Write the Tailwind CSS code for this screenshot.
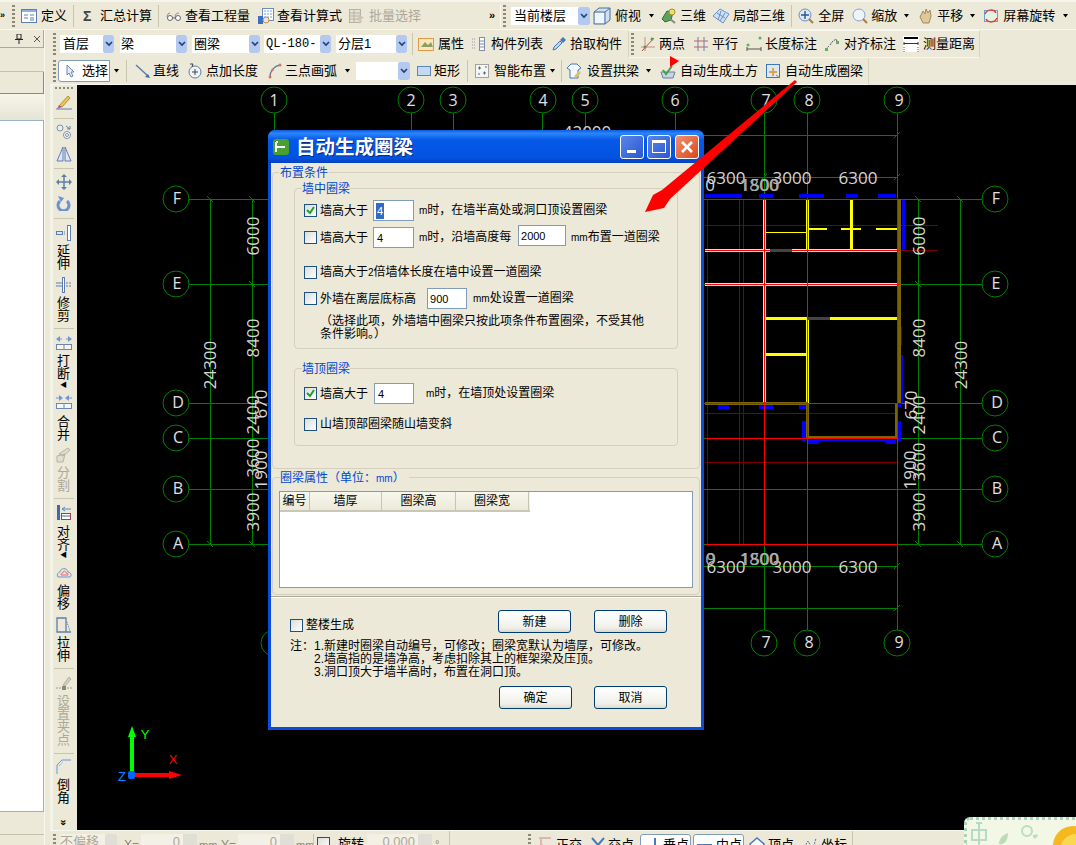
<!DOCTYPE html>
<html>
  <head>
    <meta charset="UTF-8" />
    <title>自动生成圈梁</title>
    <script src="https://cdn.jsdelivr.net/npm/@tailwindcss/browser@4"></script>
  </head>
  <body class="relative w-[1076px] h-[845px] overflow-hidden bg-[#ece9d8] text-[13px] leading-[16px] text-black font-['Liberation_Sans','Noto_Sans_CJK_SC',sans-serif]">
    <!-- top toolbar -->
    <div class="flex items-center h-[30px] border-t-2 border-t-[#f6f5ec] border-b border-b-[#f8f7f0] whitespace-nowrap">
      <span class="w-[5px] text-[9px] font-bold leading-none">»</span>
      <span class="ml-[7px] w-[3px] h-[22px] bg-[repeating-linear-gradient(180deg,#8a8878_0_2px,transparent_2px_4px)]"></span>
      <svg class="ml-[6px] w-4 h-4" viewBox="0 0 16 16"><rect x=".5" y="1.5" width="15" height="13" fill="#fff" stroke="#5b7fb5"/><rect x="1" y="2" width="14" height="2" fill="#8fb0e0"/><path d="M3 7h4M3 10h4M9 7h4M9 10h4M9 12h4" stroke="#5b7fb5"/></svg>
      <span class="ml-[4px]">定义</span>
      <span class="ml-[6px] w-px h-[22px] bg-[#c9c6b0]"></span>
      <span class="ml-[9px] w-[9px] text-[14px] font-bold text-[#444]">Σ</span>
      <span class="ml-[8px]">汇总计算</span>
      <span class="ml-[6px] w-px h-[22px] bg-[#c9c6b0]"></span>
      <svg class="ml-[7px] w-4 h-4" viewBox="0 0 16 16"><path d="M1 9c0-3 2-4 3-4M9 9c0-3 2-4 4-4" fill="none" stroke="#888"/><circle cx="4" cy="10" r="2.5" fill="#fff" stroke="#666"/><circle cx="12" cy="10" r="2.5" fill="#fff" stroke="#666"/><path d="M6 10h4" stroke="#666"/></svg>
      <span class="ml-[3px]">查看工程量</span>
      <svg class="ml-[8px] w-4 h-4" viewBox="0 0 16 16"><rect x="4.5" y=".5" width="11" height="12" fill="#fff" stroke="#6a8cc0"/><path d="M6 3h8M6 6h8M6 9h8" stroke="#7d9bd0" stroke-dasharray="2 1"/><rect x="0" y="8" width="5" height="8" fill="#3a6fc4"/><circle cx="8" cy="12" r="3" fill="#d8e8f8" stroke="#c89030"/></svg>
      <span class="ml-[3px]">查看计算式</span>
      <svg class="ml-[7px] w-4 h-4" viewBox="0 0 16 16"><rect x=".5" y="1.5" width="11" height="13" fill="#e4e2d4" stroke="#b5b3a3"/><path d="M1 5h10M1 8h10M1 11h10M5 2v12" stroke="#b5b3a3"/><path d="M10 6l5 4-3 1 1 3-2 1-1-3-2 1z" fill="#c9c7b8"/></svg>
      <span class="ml-[4px] text-[#aca899]">批量选择</span>
      <span class="ml-[68px] w-[9px] text-[11px] font-bold leading-none">»</span>
      <span class="ml-[2px] w-px h-[24px] bg-[#f8f7f0]"></span>
      <span class="ml-[2px] w-[3px] h-[22px] bg-[repeating-linear-gradient(180deg,#8a8878_0_2px,transparent_2px_4px)]"></span>
      <div class="ml-[5px] w-[79px] h-[18px] bg-white flex items-center justify-between pl-[3px]">
        <span>当前楼层</span>
        <span class="w-[12px] h-[18px] bg-[#b4c9ef] rounded-[2px] flex items-center justify-center"><svg class="w-2 h-[6px]" viewBox="0 0 8 6"><path d="M1 1l3 3 3-3" fill="none" stroke="#1f3f7a" stroke-width="1.6"/></svg></span>
      </div>
      <svg class="ml-[3px] w-[18px] h-[18px]" viewBox="0 0 18 18"><path d="M1 5l5-4h11v12l-5 4H1z" fill="#cfe0ee" stroke="#48709a"/><path d="M1 5h11v12M12 5l5-4" fill="none" stroke="#48709a"/><rect x="2" y="6" width="9" height="10" fill="#eef5fb"/></svg>
      <span class="ml-[4px]">俯视</span>
      <svg class="ml-[7px] w-[7px] h-1" viewBox="0 0 7 4"><path d="M1 0h5L3.500 3.500z" fill="#000"/></svg>
      <svg class="ml-[6px] w-4 h-4" viewBox="0 0 16 16"><path d="M1 11l5-8 6 1-2 8-6 2z" fill="#5aa35a" stroke="#2f6f3a"/><circle cx="11" cy="4" r="3" fill="#f0e060" stroke="#a09030"/><path d="M9 11l5 4" stroke="#888" stroke-width="2"/></svg>
      <span class="ml-[3px]">三维</span>
      <svg class="ml-[6px] w-[18px] h-4" viewBox="0 0 18 16"><path d="M1 8l7-7 9 5-6 9z" fill="#cfe0f4" stroke="#6a8fc0"/><path d="M5 5l8 5M9 3l-3 9M13 5l-5 8" stroke="#6a8fc0"/></svg>
      <span class="ml-[3px]">局部三维</span>
      <span class="ml-[6px] w-px h-[22px] bg-[#c9c6b0]"></span>
      <svg class="ml-[6px] w-4 h-4" viewBox="0 0 16 16"><circle cx="7" cy="7" r="6" fill="#dce8f6" stroke="#6f8fbb"/><path d="M7 3v8M3 7h8" stroke="#30558f" stroke-width="1.4"/><path d="M11 11l4 4" stroke="#b07a3a" stroke-width="2"/></svg>
      <span class="ml-[4px]">全屏</span>
      <svg class="ml-[8px] w-4 h-4" viewBox="0 0 16 16"><circle cx="7" cy="7" r="6" fill="#eef3fa" stroke="#8ba4c6"/><path d="M11 11l4 4" stroke="#b07a3a" stroke-width="2"/></svg>
      <span class="ml-[3px]">缩放</span>
      <svg class="ml-[6px] w-[7px] h-1" viewBox="0 0 7 4"><path d="M1 0h5L3.500 3.500z" fill="#000"/></svg>
      <svg class="ml-[8px] w-4 h-4" viewBox="0 0 16 16"><path d="M2 9l3-6 2 3 1-5 2 4 2-3 1 6-2 7H5z" fill="#e0c89a" stroke="#a08a60"/></svg>
      <span class="ml-[3px]">平移</span>
      <svg class="ml-[6px] w-[7px] h-1" viewBox="0 0 7 4"><path d="M1 0h5L3.500 3.500z" fill="#000"/></svg>
      <svg class="ml-[7px] w-4 h-4" viewBox="0 0 16 16"><rect x="1.500" y="2.500" width="13" height="11" fill="#e4f2e0" stroke="#6d9fd0"/><path d="M2 6c2-5 9-5 11-1M14 10c-2 5-9 5-11 1" fill="none" stroke="#e04040" stroke-width="1.500"/></svg>
      <span class="ml-[4px]">屏幕旋转</span>
      <svg class="ml-[7px] w-[7px] h-1" viewBox="0 0 7 4"><path d="M1 0h5L3.500 3.500z" fill="#000"/></svg>
    </div>

    <div class="flex h-[815px]">
      <!-- left pane -->
      <div class="w-[50px] shrink-0 flex">
        <div class="w-[45px] flex flex-col border-r border-r-[#f8f7f0]">
          <div class="h-[18px] flex items-center border-b border-b-[#aca899] border-r border-r-[#aca899]">
            <svg class="ml-[15px] w-2 h-[10px]" viewBox="0 0 8 10"><path d="M2 0h4v5H2zM0 5.500h8M4 6v4" fill="none" stroke="#222"/></svg>
            <svg class="ml-[10px] w-2 h-2" viewBox="0 0 8 8"><path d="M1 1l6 6M7 1L1 7" stroke="#555"/></svg>
          </div>
          <div class="h-[24px] border-b border-b-[#c5c2ae]"></div>
          <div class="h-[22px] border-b border-b-[#8c8a7a] border-r border-r-[#8c8a7a] bg-[#ece9d8]"></div>
          <div class="h-[26px] bg-[linear-gradient(180deg,#f6f5ea,#e6e4d4)]"></div>
          <div class="h-[692px] bg-white border-y border-y-[#9cb0c8] border-r border-r-[#9cb0c8]"></div>
          <div class="h-[23px] border-b border-b-[#c5c2ae]"></div>
        </div>
      </div>

      <div class="w-[1026px]">
        <!-- row 2 -->
        <div class="flex items-center h-[28px] whitespace-nowrap">
          <span class="ml-[3px] w-[3px] h-[22px] bg-[repeating-linear-gradient(180deg,#8a8878_0_2px,transparent_2px_4px)]"></span>
          <div class="ml-[4px] w-[54px] h-[18px] bg-white flex items-center justify-between pl-[3px]">
            <span>首层</span>
            <span class="w-[11px] h-[18px] bg-[#b4c9ef] rounded-[2px] flex items-center justify-center"><svg class="w-2 h-[6px]" viewBox="0 0 8 6"><path d="M1 1l3 3 3-3" fill="none" stroke="#1f3f7a" stroke-width="1.6"/></svg></span>
          </div>
          <div class="ml-[6px] w-[67px] h-[18px] bg-white flex items-center justify-between pl-[1px]">
            <span>梁</span>
            <span class="w-[11px] h-[18px] bg-[#b4c9ef] rounded-[2px] flex items-center justify-center"><svg class="w-2 h-[6px]" viewBox="0 0 8 6"><path d="M1 1l3 3 3-3" fill="none" stroke="#1f3f7a" stroke-width="1.6"/></svg></span>
          </div>
          <div class="ml-[5px] w-[68px] h-[18px] bg-white flex items-center justify-between pl-[2px]">
            <span>圈梁</span>
            <span class="w-[11px] h-[18px] bg-[#b4c9ef] rounded-[2px] flex items-center justify-center"><svg class="w-2 h-[6px]" viewBox="0 0 8 6"><path d="M1 1l3 3 3-3" fill="none" stroke="#1f3f7a" stroke-width="1.6"/></svg></span>
          </div>
          <div class="ml-[4px] w-[67px] h-[18px] bg-white flex items-center justify-between pl-[2px] text-[12px] font-['Liberation_Mono','Noto_Sans_CJK_SC',monospace]">
            <span>QL-180-</span>
            <span class="w-[11px] h-[18px] bg-[#b4c9ef] rounded-[2px] flex items-center justify-center"><svg class="w-2 h-[6px]" viewBox="0 0 8 6"><path d="M1 1l3 3 3-3" fill="none" stroke="#1f3f7a" stroke-width="1.6"/></svg></span>
          </div>
          <div class="ml-[5px] w-[71px] h-[18px] bg-white flex items-center justify-between pl-[2px]">
            <span>分层1</span>
            <span class="w-[11px] h-[18px] bg-[#b4c9ef] rounded-[2px] flex items-center justify-center"><svg class="w-2 h-[6px]" viewBox="0 0 8 6"><path d="M1 1l3 3 3-3" fill="none" stroke="#1f3f7a" stroke-width="1.6"/></svg></span>
          </div>
          <span class="ml-[5px] w-px h-[22px] bg-[#c9c6b0]"></span>
          <svg class="ml-[5px] w-4 h-4" viewBox="0 0 16 16"><rect x=".5" y="2.500" width="15" height="12" fill="#fbe6c0" stroke="#e09a40"/><path d="M3 11l4-5 3 3 3-3 2 5z" fill="#8a9f60"/></svg>
          <span class="ml-[4px]">属性</span>
          <svg class="ml-[6px] w-4 h-4" viewBox="0 0 16 16"><rect x="9.500" y="1.500" width="5" height="13" fill="#fff" stroke="#7d90a8"/><path d="M10 5h4M10 8h4M10 11h4" stroke="#7d90a8"/><path d="M2 3h4M2 6h4M2 9h4M2 12h4" stroke="#8a9ab0" stroke-dasharray="1 1"/></svg>
          <span class="ml-[5px]">构件列表</span>
          <svg class="ml-[8px] w-4 h-4" viewBox="0 0 16 16"><path d="M2 14l1-3 6-6 2 2-6 6z" fill="#bcd4f0" stroke="#4a78b8"/><path d="M9 4l3-3 3 3-3 3z" fill="#4a78b8"/></svg>
          <span class="ml-[3px]">拾取构件</span>
          <div class="ml-[6px] w-[352px] h-[28px] flex items-center border-x border-x-[#d6d3be] border-y border-y-[#f8f7f0]">
            <span class="ml-[2px] w-[3px] h-[22px] bg-[repeating-linear-gradient(180deg,#8a8878_0_2px,transparent_2px_4px)]"></span>
            <svg class="ml-[6px] w-4 h-4" viewBox="0 0 16 16"><path d="M1 11h14M5 1v14" stroke="#c09080"/><path d="M2 15L14 2" stroke="#c04848"/><circle cx="5" cy="11" r="1.500" fill="#5a9a50"/><circle cx="12" cy="3" r="1.500" fill="#5a9a50"/></svg>
            <span class="ml-[3px]">两点</span>
            <svg class="ml-[8px] w-4 h-4" viewBox="0 0 16 16"><path d="M1 5h14M1 11h14" stroke="#c06060"/><path d="M5 1v14M11 1v14" stroke="#7080b0"/></svg>
            <span class="ml-[3px]">平行</span>
            <svg class="ml-[8px] w-4 h-4" viewBox="0 0 16 16"><circle cx="14" cy="2" r="1.500" fill="#60b060"/><circle cx="2" cy="9" r="1.500" fill="#60b060"/><path d="M1 11v4M15 11v4M1 13h14" stroke="#555"/></svg>
            <span class="ml-[3px]">长度标注</span>
            <svg class="ml-[7px] w-4 h-4" viewBox="0 0 16 16"><path d="M2 13l3-3M6 9l2-3 4-3 2 4" fill="none" stroke="#555" stroke-dasharray="2 1"/><rect x="1" y="12" width="3" height="3" fill="#60b060"/><rect x="12" y="5" width="3" height="3" fill="#60b060"/></svg>
            <span class="ml-[4px]">对齐标注</span>
            <svg class="ml-[7px] w-4 h-4" viewBox="0 0 16 16"><rect width="16" height="16" fill="#fff"/><path d="M1 2h14" stroke="#000" stroke-width="2"/><path d="M1 6v3M15 6v3M1 7.500h14" stroke="#333"/><path d="M1 11v5M15 11v5" stroke="#555" stroke-dasharray="1 1"/></svg>
            <span class="ml-[4px]">测量距离</span>
          </div>
        </div>

        <!-- row 3 -->
        <div class="flex items-center w-[819px] h-[27px] whitespace-nowrap border-r border-r-[#d6d3be] border-b border-b-[#f8f7f0]">
          <span class="ml-[3px] w-[3px] h-[22px] bg-[repeating-linear-gradient(180deg,#8a8878_0_2px,transparent_2px_4px)]"></span>
          <div class="ml-[2px] w-[52px] h-[22px] bg-white border border-[#7f9db9] rounded-l-[3px] flex items-center">
            <svg class="ml-[6px] w-[10px] h-[14px]" viewBox="0 0 10 14"><path d="M2 1v10l2-2 2 4 2-1-2-4h3z" fill="#e4ecf8" stroke="#6d88ac"/></svg>
            <span class="ml-[7px]">选择</span>
          </div>
          <svg class="ml-[3px] w-[7px] h-1" viewBox="0 0 7 4"><path d="M1 0h5L3.500 3.500z" fill="#000"/></svg>
          <span class="ml-[6px] w-px h-[22px] bg-[#c9c6b0]"></span>
          <svg class="ml-[8px] w-4 h-4" viewBox="0 0 16 16"><path d="M1 2l12 11" stroke="#5d7fa8" stroke-width="1.500"/><path d="M15 15l-5-1 3-3z" fill="#3b6ea8"/></svg>
          <span class="ml-[2px]">直线</span>
          <svg class="ml-[8px] w-4 h-4" viewBox="0 0 16 16"><circle cx="8" cy="9" r="6" fill="#eef3fa" stroke="#5d7fb0"/><path d="M8 6v6M5 9h6" stroke="#444"/><path d="M3 1h3l-1 3" fill="none" stroke="#444"/></svg>
          <span class="ml-[3px]">点加长度</span>
          <svg class="ml-[9px] w-4 h-4" viewBox="0 0 16 16"><path d="M3 14C3 8 7 3 13 2" fill="none" stroke="#5a7fa8" stroke-width="1.300"/><circle cx="3" cy="14" r="1.500" fill="#e07060"/><circle cx="5.500" cy="7" r="1.300" fill="#e07060"/><circle cx="13" cy="2" r="1.500" fill="#e07060"/></svg>
          <span class="ml-[2px]">三点画弧</span>
          <svg class="ml-[7px] w-[7px] h-1" viewBox="0 0 7 4"><path d="M1 0h5L3.500 3.500z" fill="#000"/></svg>
          <div class="ml-[5px] w-[54px] h-[18px] bg-white flex items-center justify-end">
            <span class="w-[12px] h-[18px] bg-[#b4c9ef] rounded-[2px] flex items-center justify-center"><svg class="w-2 h-[6px]" viewBox="0 0 8 6"><path d="M1 1l3 3 3-3" fill="none" stroke="#1f3f7a" stroke-width="1.6"/></svg></span>
          </div>
          <svg class="ml-[6px] w-4 h-4" viewBox="0 0 16 16"><rect x="1.500" y="3.500" width="13" height="9" fill="#c5d9f2" stroke="#5d86bb"/></svg>
          <span class="ml-[2px]">矩形</span>
          <span class="ml-[7px] w-px h-[22px] bg-[#c9c6b0]"></span>
          <svg class="ml-[6px] w-4 h-4" viewBox="0 0 16 16"><rect x="1.500" y="1.500" width="13" height="13" fill="#f6f6ee" stroke="#555" stroke-dasharray="1 1"/><path d="M4 5h3M5.500 3.500v3M9 10h3M10.500 8.500v3M4 11h2M11 4h2" stroke="#3d6aa8"/></svg>
          <span class="ml-[4px]">智能布置</span>
          <svg class="ml-[3px] w-[7px] h-1" viewBox="0 0 7 4"><path d="M1 0h5L3.500 3.500z" fill="#000"/></svg>
          <span class="ml-[5px] w-px h-[22px] bg-[#c9c6b0]"></span>
          <svg class="ml-[4px] w-4 h-4" viewBox="0 0 16 16"><path d="M1 5l4-4h6l4 4-3 2v8H4V7z" fill="#f4f8fc" stroke="#3f78b8"/><path d="M8 13l5-5 2 2-5 5z" fill="#e0c070"/></svg>
          <span class="ml-[5px]">设置拱梁</span>
          <svg class="ml-[6px] w-[7px] h-1" viewBox="0 0 7 4"><path d="M1 0h5L3.500 3.500z" fill="#000"/></svg>
          <span class="relative ml-[8px] w-4 h-4">
            <svg class="w-4 h-4" viewBox="0 0 16 16"><path d="M1 9h14l-2 6H3z" fill="#c8d4e4" stroke="#6880a0"/><path d="M3 7l3 4 6-8" fill="none" stroke="#40a050" stroke-width="2"/></svg>
            <svg class="absolute left-[10px] -top-[7px] w-[9px] h-[11px]" viewBox="0 0 9 11"><path d="M0 0l9 5-9 6z" fill="#f00"/></svg>
          </span>
          <span class="ml-[4px]">自动生成土方</span>
          <svg class="ml-[7px] w-4 h-4" viewBox="0 0 16 16"><rect x="1.500" y="1.500" width="13" height="13" fill="#dce8f6" stroke="#3f78b8"/><path d="M4 9h8M8 5v8" stroke="#e0a050" stroke-width="2"/><path d="M11 12l4 3" stroke="#b07a3a"/></svg>
          <span class="ml-[4px]">自动生成圈梁</span>
        </div>

        <!-- vertical toolbar + drawing -->
        <div class="flex h-[745px]">
          <div class="w-[27px] shrink-0 flex flex-col items-center text-center whitespace-nowrap leading-[13px] bg-[linear-gradient(90deg,#f4f3e8_0,#f4f3e8_3px,#ece9d8_3px)]">
            <span class="mt-[2px] w-[18px] h-[2px] bg-[repeating-linear-gradient(90deg,#8a8878_0_2px,transparent_2px_4px)]"></span>
            <svg class="mt-[5px] w-4 h-4 shrink-0" viewBox="0 0 16 16"><path d="M3 12l9-10 2 2-8 9z" fill="#eac95a" stroke="#b09030"/><path d="M1 15l2-4 3 2z" fill="#c0508a"/><path d="M0 15h16" stroke="#5d7fb5"/></svg>
            <span class="mt-[8px] w-5 h-px bg-[#c9c6b0]"></span>
            <svg class="mt-[5px] w-4 h-4 shrink-0" viewBox="0 0 16 16"><circle cx="4" cy="4" r="3" fill="#e8eef6" stroke="#7f8fa5"/><circle cx="11" cy="11" r="3.500" fill="#fff" stroke="#7f8fa5"/><circle cx="11" cy="11" r="1.500" fill="none" stroke="#7f8fa5"/><path d="M10 2l4 3M14 2v3h-3" fill="none" stroke="#5d7fb5"/></svg>
            <svg class="mt-[6px] w-4 h-4 shrink-0" viewBox="0 0 16 16"><path d="M7 1L1 15h6zM9 1l6 14H9z" fill="#dde6f4" stroke="#5d7fb5"/></svg>
            <span class="mt-[6px] w-5 h-px bg-[#c9c6b0]"></span>
            <svg class="mt-[5px] w-4 h-4 shrink-0" viewBox="0 0 16 16"><path d="M8 1v14M1 8h14" stroke="#5d7fa8" stroke-width="1.500"/><path d="M8 0l3 3H5zM8 16l-3-3h6zM0 8l3-3v6zM16 8l-3 3V5z" fill="#5d7fa8"/></svg>
            <svg class="mt-[5px] w-4 h-4 shrink-0" viewBox="0 0 16 16"><path d="M4 6a5.500 5.500 0 1 0 7 0" fill="none" stroke="#6c92d4" stroke-width="3"/><path d="M2 1l6 2-3 4z" fill="#6c92d4"/></svg>
            <span class="mt-[7px] w-5 h-px bg-[#c9c6b0]"></span>
            <svg class="mt-[6px] w-4 h-4 shrink-0" viewBox="0 0 16 16"><rect x="11.500" y=".5" width="3" height="15" fill="#fff" stroke="#5d7fb5"/><rect x=".5" y="6.500" width="6" height="3" fill="#dde6f4" stroke="#5d7fb5"/><path d="M8 7h2M8 9h2" stroke="#5d7fb5" stroke-dasharray="1 1"/></svg>
            <span class="mt-[3px]">延<br />伸</span>
            <svg class="mt-[7px] w-4 h-4 shrink-0" viewBox="0 0 16 16"><rect x="6.500" y=".5" width="2" height="15" fill="#fff" stroke="#5d7fb5"/><path d="M0 6h6M0 9h6" stroke="#5d7fb5"/><path d="M10 6h5M10 9h5" stroke="#5d7fb5" stroke-dasharray="2 1"/></svg>
            <span class="mt-[3px]">修<br />剪</span>
            <span class="mt-[6px] w-5 h-px bg-[#c9c6b0]"></span>
            <svg class="mt-[6px] w-4 h-4 shrink-0" viewBox="0 0 16 16"><path d="M0 4l4-3v6zM16 4l-4-3v6z" fill="#6f96dd"/><path d="M4 4h2M10 4h2" stroke="#6f96dd"/><rect x=".5" y="9.500" width="15" height="5" fill="#f4f6fa" stroke="#6d88ac"/><path d="M8 9v6" stroke="#6d88ac"/></svg>
            <span class="mt-[3px]">打<br />断</span>
            <span class="text-[7px] leading-[9px]">◀</span>
            <svg class="mt-[5px] w-4 h-4 shrink-0" viewBox="0 0 16 16"><path d="M7 4L3 1v6zM9 4l4-3v6z" fill="#6f96dd"/><path d="M0 4h3M13 4h3" stroke="#6f96dd"/><rect x=".5" y="9.500" width="15" height="5" fill="#f4f6fa" stroke="#6d88ac"/><path d="M8 9v6" stroke="#6d88ac"/></svg>
            <span class="mt-[5px]">合<br />并</span>
            <svg class="mt-[6px] w-4 h-4 shrink-0" viewBox="0 0 16 16"><path d="M1 9l8-2-2 8H1zM3 7l9-6 2 2-7 6z" fill="#e0ded0" stroke="#b5b3a3"/></svg>
            <span class="mt-[3px] text-[#aca899]">分<br />割</span>
            <span class="mt-[6px] w-5 h-px bg-[#c9c6b0]"></span>
            <svg class="mt-[6px] w-4 h-4 shrink-0" viewBox="0 0 16 16"><rect x="1" y="0" width="3" height="15" fill="#3f6aa8"/><path d="M6 4h9M9 2L6 4l3 2" fill="none" stroke="#5d86c0"/><rect x="5.500" y="8.500" width="9" height="6" fill="#fff" stroke="#a04040"/><path d="M6 11h8" stroke="#3f6aa8"/></svg>
            <span class="mt-[4px]">对<br />齐</span>
            <span class="text-[7px] leading-[8px]">◀</span>
            <svg class="mt-[6px] w-4 h-4 shrink-0" viewBox="0 0 16 16"><path d="M2 12c-2-3 1-5 2-5 0-4 7-5 8 0 3 0 4 4 2 5z" fill="#dfe6f2" stroke="#7a93b8"/><path d="M5 10c0-2 1-2 2-2 0-3 3-2 3 0 2 0 2 1 2 2z" fill="#fbe0dc" stroke="#e07060"/></svg>
            <span class="mt-[3px]">偏<br />移</span>
            <svg class="mt-[7px] w-4 h-4 shrink-0" viewBox="0 0 16 16"><path d="M1 1h9v14H1zM10 15h5" fill="none" stroke="#5d7fa8" stroke-width="1.300"/><path d="M11 5l3 9" stroke="#5d7fa8" stroke-dasharray="1 1"/></svg>
            <span class="mt-[3px]">拉<br />伸</span>
            <span class="mt-[6px] w-5 h-px bg-[#c9c6b0]"></span>
            <svg class="mt-[7px] w-4 h-4 shrink-0" viewBox="0 0 16 16"><path d="M7 9l6-8 2 2-6 7z" fill="#d0cec0" stroke="#b5b3a3"/><path d="M0 12h5M11 12h5" stroke="#a09e8e" stroke-dasharray="2 1"/><rect x="6" y="10" width="4" height="4" fill="#8a8878"/></svg>
            <span class="mt-[2px] text-[#aca899]">设<br />置<br />夹<br />点</span>
            <span class="mt-[7px] w-5 h-px bg-[#c9c6b0]"></span>
            <svg class="mt-[5px] w-4 h-4 shrink-0" viewBox="0 0 16 16"><path d="M1 15V6l5-5h9" fill="none" stroke="#5a9ae0"/><path d="M3 7l4-4" stroke="#5a9ae0" stroke-dasharray="1 1"/></svg>
            <span class="mt-[3px]">倒<br />角</span>
            <span class="mt-[14px] text-[11px] font-bold leading-[9px] rotate-90">»</span>
          </div>

          <svg class="block w-[999px] h-[745px] bg-black" viewBox="77 85 999 745" font-family="'Open Sans',sans-serif">
            <g fill="none" stroke="#008000" shape-rendering="crispEdges">
              <path d="M274.500 113V630M411.500 113V630M453.500 113V630M542.500 113V630M585.500 113V630M675.500 113V630M764.500 113V630M807.500 113V630M897.500 113V630" />
              <path d="M189 199.500H982M189 284.500H982M189 403.500H982M189 438.500H982M189 489.500H982M189 544.500H982" />
              <path d="M210.500 199V544M252.500 199V544M918.500 199V544M960.500 199V544" />
              <path d="M274 135.500H897M274 177.500H897M274 566.500H897M274 608.500H897" />
            </g>
            <path d="M207 196l6 6M249 196l6 6M207 541l6 6M249 541l6 6M249 281l6 6M915 196l6 6M957 196l6 6M915 281l6 6M915 541l6 6M957 541l6 6M894 138l6-6M894 180l6-6M894 569l6-6M894 611l6-6M761 180l6-6M804 180l6-6" stroke="#008000" />
            <g fill="none" stroke="#008000">
              <circle cx="274" cy="100" r="13"/><circle cx="411" cy="100" r="13"/><circle cx="453" cy="100" r="13"/><circle cx="543" cy="100" r="13"/><circle cx="585" cy="100" r="13"/><circle cx="675" cy="100" r="13"/><circle cx="764" cy="100" r="13"/><circle cx="807" cy="100" r="13"/><circle cx="897" cy="100" r="13"/>
              <circle cx="274" cy="643" r="13"/><circle cx="764" cy="643" r="13"/><circle cx="807" cy="643" r="13"/><circle cx="897" cy="643" r="13"/>
              <circle cx="176" cy="199" r="13"/><circle cx="176" cy="284" r="13"/><circle cx="176" cy="403" r="13"/><circle cx="176" cy="438" r="13"/><circle cx="176" cy="489" r="13"/><circle cx="176" cy="544" r="13"/>
              <circle cx="995" cy="199" r="13"/><circle cx="995" cy="284" r="13"/><circle cx="995" cy="403" r="13"/><circle cx="995" cy="438" r="13"/><circle cx="995" cy="489" r="13"/><circle cx="995" cy="544" r="13"/>
            </g>

            <!-- walls and beams -->
            <g shape-rendering="crispEdges">
              <path d="M705 225.500H938M705 250.500H938M705 413.500H897M705 462.500H897M707.500 199V544M739.500 199V544M743.500 199V544" stroke="#800000" fill="none"/>
              <g fill="#ff0">
                <rect x="705" y="249" width="195" height="3"/><rect x="705" y="283" width="195" height="3"/>
                <rect x="763" y="199" width="3" height="204"/><rect x="806" y="199" width="3" height="52"/><rect x="806" y="318" width="3" height="85"/>
                <rect x="766" y="317" width="41" height="3"/><rect x="830" y="317" width="70" height="3"/><rect x="766" y="353" width="41" height="3"/>
                <rect x="850" y="200" width="3" height="49"/><rect x="809" y="228" width="18" height="2"/><rect x="841" y="228" width="20" height="2"/><rect x="876" y="228" width="24" height="2"/><rect x="766" y="232" width="41" height="1"/>
              </g>
              <g fill="#00f">
                <rect x="705" y="194" width="37" height="4"/><rect x="759" y="194" width="14" height="4"/><rect x="799" y="194" width="25" height="4"/><rect x="846" y="194" width="11" height="4"/><rect x="878" y="194" width="18" height="4"/>
                <rect x="902" y="200" width="3" height="50"/><rect x="901" y="327" width="1" height="18"/><rect x="898" y="355" width="5" height="48"/>
                <rect x="718" y="405" width="11" height="4"/><rect x="759" y="405" width="14" height="4"/><rect x="799" y="405" width="7" height="4"/>
                <rect x="802" y="421" width="4" height="20"/><rect x="897" y="421" width="4" height="20"/><rect x="807" y="440" width="89" height="1"/><rect x="807" y="441" width="12" height="3"/><rect x="886" y="441" width="10" height="3"/><rect x="897" y="403" width="4" height="4"/>
              </g>
              <g fill="#7a6500">
                <rect x="705" y="402" width="102" height="3"/><rect x="898" y="199" width="3" height="204"/><rect x="806" y="403" width="3" height="35"/><rect x="895" y="403" width="2" height="35"/><rect x="807" y="436" width="90" height="3"/>
              </g>
              <path d="M705 199.500H897M764.500 199V544M807.500 199V544M897.500 199V544M705 403.500H897M705 438.500H897M705 489.500H897M705 544.500H897M705 250.500H900M705 284.500H900" stroke="#f00" fill="none"/>
              <rect x="807" y="317" width="23" height="3" fill="#444"/><rect x="770" y="249" width="22" height="3" fill="#444"/>
            </g>

            <!-- dimension text -->
            <g fill="#d6d6d6" font-size="17" text-anchor="middle" dominant-baseline="central">
              <text x="587" y="131">42000</text>
              <text x="726" y="177">6300</text><text x="792" y="177">3000</text><text x="858" y="177">6300</text>
              <text x="759" y="184" fill="#b0b0b0">1800</text><text x="760" y="184" fill="#b0b0b0">1500</text><text x="710" y="184">0</text>
              <text x="726" y="566">6300</text><text x="792" y="566">3000</text><text x="858" y="566">6300</text>
              <text x="759" y="558" fill="#b0b0b0">1800</text><text x="760" y="558" fill="#b0b0b0">1500</text><text x="710" y="558" fill="#b0b0b0">0</text><text x="711" y="558" fill="#b0b0b0">9</text>
              <text transform="translate(209 365) rotate(-90)">24300</text>
              <text transform="translate(252 236) rotate(-90)">6000</text>
              <text transform="translate(252 338) rotate(-90)">8400</text>
              <text transform="translate(260 404) rotate(-90)">670</text>
              <text transform="translate(252 415) rotate(-90)">2400</text>
              <text transform="translate(252 458) rotate(-90)">3600</text>
              <text transform="translate(260 470) rotate(-90)">1900</text>
              <text transform="translate(252 512) rotate(-90)">3900</text>
              <text transform="translate(960 365) rotate(-90)">24300</text>
              <text transform="translate(918 236) rotate(-90)">6000</text>
              <text transform="translate(918 338) rotate(-90)">8400</text>
              <text transform="translate(910 405) rotate(-90)">670</text>
              <text transform="translate(918 415) rotate(-90)">2400</text>
              <text transform="translate(918 462) rotate(-90)">3600</text>
              <text transform="translate(909 470) rotate(-90)">1900</text>
              <text transform="translate(918 512) rotate(-90)">3900</text>
            </g>
            <g fill="#e0e0e0" font-size="16" text-anchor="middle" dominant-baseline="central">
              <text x="274" y="100">1</text><text x="411" y="100">2</text><text x="453" y="100">3</text><text x="543" y="100">4</text><text x="585" y="100">5</text><text x="675" y="100">6</text><text x="766" y="100">7</text><text x="809" y="100">8</text><text x="899" y="100">9</text>
              <text x="766" y="642">7</text><text x="809" y="642">8</text><text x="899" y="642">9</text>
              <text x="177" y="198">F</text><text x="177" y="283">E</text><text x="178" y="402">D</text><text x="178" y="437">C</text><text x="178" y="488">B</text><text x="178" y="543">A</text>
              <text x="996" y="198">F</text><text x="996" y="283">E</text><text x="997" y="402">D</text><text x="997" y="437">C</text><text x="997" y="488">B</text><text x="997" y="543">A</text>
            </g>

            <!-- ucs axes -->
            <rect x="130" y="735" width="4" height="40" fill="#0f0"/>
            <path d="M132 726l4 11h-8z" fill="#0f0"/>
            <rect x="132" y="773" width="38" height="4" fill="#f00"/>
            <path d="M182 775l-13-4v8z" fill="#f00"/>
            <rect x="128" y="771" width="7" height="8" rx="2" fill="#06f"/>
            <text x="145" y="739" fill="#0f0" font-size="13" text-anchor="middle" font-family="'Liberation Sans',sans-serif">Y</text>
            <text x="173" y="764" fill="#f00" font-size="13" text-anchor="middle" font-family="'Liberation Sans',sans-serif">X</text>
            <text x="122" y="781" fill="#08f" font-size="13" text-anchor="middle" font-family="'Liberation Sans',sans-serif">Z</text>
          </svg>
        </div>

        <!-- status bar -->
        <div class="flex items-start h-[15px] overflow-hidden border-t border-t-[#f8f7f0] whitespace-nowrap text-[13px]">
          <span class="ml-[3px] mt-[3px] w-[3px] h-[12px] bg-[repeating-linear-gradient(180deg,#8a8878_0_2px,transparent_2px_4px)]"></span>
          <div class="ml-[4px] mt-[3px] w-[57px] h-[18px] bg-[#f3f1e6] flex justify-between text-[#aca899]"><span>不偏移</span><span class="w-3 h-[18px] bg-[#e0dfd5] rounded-[2px]"></span></div>
          <span class="ml-[7px] mt-[6px] w-[14px] text-[#8a8878] text-[12px]">X=</span>
          <div class="ml-[3px] mt-[3px] w-[56px] h-[18px] bg-[#f3f1e6] flex justify-end text-[#aca899]"><span>0</span><span class="ml-[3px] w-[14px] h-[18px] bg-[#e0dfd5]"></span></div>
          <span class="ml-[2px] mt-[6px] w-[13px] text-[#8a8878] text-[11px]">mm</span>
          <span class="ml-[9px] mt-[6px] w-[14px] text-[#8a8878] text-[12px]">Y=</span>
          <div class="ml-[3px] mt-[3px] w-[56px] h-[18px] bg-[#f3f1e6] flex justify-end text-[#aca899]"><span>0</span><span class="ml-[3px] w-[14px] h-[18px] bg-[#e0dfd5]"></span></div>
          <span class="ml-[2px] mt-[6px] w-[13px] text-[#8a8878] text-[11px]">mm</span>
          <span class="ml-[4px] mt-[3px] w-px h-[12px] bg-[#c9c6b0]"></span>
          <span class="ml-[3px] mt-[6px] w-[13px] h-[13px] border border-[#1c5180] bg-[linear-gradient(135deg,#dcdcd7,#fff)]"></span>
          <span class="ml-[8px] mt-[5px]">旋转</span>
          <div class="ml-[3px] mt-[3px] w-[65px] h-[18px] bg-[#f3f1e6] flex justify-end text-[#aca899]"><span>0.000</span><span class="ml-[3px] w-[14px] h-[18px] bg-[#e0dfd5]"></span></div>
          <span class="ml-[3px] mt-[5px] w-1 text-[#8a8878] text-[11px]">°</span>
          <span class="ml-[10px] w-px h-[15px] bg-[#c9c6b0]"></span>
          <span class="ml-[78px] mt-[3px] w-[3px] h-[12px] bg-[repeating-linear-gradient(180deg,#8a8878_0_2px,transparent_2px_4px)]"></span>
          <svg class="ml-[6px] mt-[6px] w-4 h-4" viewBox="0 0 16 16"><path d="M2 1h12M4 1v14M4 7l8 8" fill="none" stroke="#e0b4b4" stroke-width="2"/></svg>
          <span class="ml-[3px] mt-[6px]">正交</span>
          <svg class="ml-[8px] mt-[6px] w-4 h-4" viewBox="0 0 16 16"><path d="M2 1l6 7 6-7M8 8v8" fill="none" stroke="#4a78c0" stroke-width="2"/></svg>
          <span class="ml-[2px] mt-[6px]">交点</span>
          <div class="ml-[6px] mt-[3px] w-[51px] h-[22px] bg-white border border-[#7f9db9] rounded-[3px] flex"><span class="ml-[13px] mt-[3px] w-[2px] h-[16px] bg-[#4a78c0]"></span><span class="ml-[7px] mt-[2px]">垂点</span></div>
          <div class="ml-[2px] mt-[3px] w-[51px] h-[22px] bg-white border border-[#7f9db9] rounded-[3px] flex"><span class="ml-[3px] mt-[9px] w-[15px] h-[4px] bg-[#4a78c0]"></span><span class="ml-[4px] mt-[2px]">中点</span></div>
          <svg class="ml-[5px] mt-[5px] w-4 h-4" viewBox="0 0 16 16"><path d="M1 8l7-6 7 6-3 7H4z" fill="#fff" stroke="#4a78c0" stroke-width="1.500"/></svg>
          <span class="ml-[3px] mt-[6px]">顶点</span>
          <svg class="ml-[8px] mt-[6px] w-4 h-4" viewBox="0 0 16 16"><path d="M1 13l5-9 5 9 3-12" fill="none" stroke="#4a78c0" stroke-dasharray="2 1"/></svg>
          <span class="ml-[3px] mt-[6px]">坐标</span>
          <span class="ml-[5px] w-px h-[15px] bg-[#c9c6b0]"></span>
        </div>
      </div>
    </div>

    <!-- dialog window -->
    <div class="absolute left-[268px] top-[130px] w-[436px] h-[600px] flex flex-col bg-[#0a4ce0] rounded-t-[7px] px-[3px] pb-[3px] text-[12px] whitespace-nowrap">
      <div class="-mx-[3px] h-[33px] shrink-0 rounded-t-[7px] flex items-center bg-[linear-gradient(180deg,#0a5be0_0%,#2a86f8_10%,#0558e8_30%,#0353e0_85%,#0340c0_100%)]">
        <svg class="ml-[5px] w-4 h-4 shrink-0" viewBox="0 0 16 16"><rect width="16" height="16" rx="3" fill="#48a030"/><path d="M3 3v10M3 8h9M3 3h2" stroke="#fff" stroke-width="2"/></svg>
        <span class="ml-[7px] text-[19.5px] leading-[22px] font-bold text-white [text-shadow:1px_1px_0_#0a2a80]">自动生成圈梁</span>
        <span class="ml-auto w-[24px] h-[24px] rounded-[3px] border border-white bg-[linear-gradient(135deg,#5a86e8,#2a58d0)] flex items-end"><span class="ml-[6px] mb-[5px] w-[9px] h-[3px] bg-white"></span></span>
        <span class="ml-[3px] w-[24px] h-[24px] rounded-[3px] border border-white bg-[linear-gradient(135deg,#5a86e8,#2a58d0)] flex items-center justify-center"><span class="w-[14px] h-[13px] border border-white border-t-[3px]"></span></span>
        <span class="ml-[4px] mr-[5px] w-[24px] h-[24px] rounded-[3px] border border-white bg-[linear-gradient(135deg,#f09070,#d84818)] flex items-center justify-center"><svg class="w-[14px] h-[14px]" viewBox="0 0 14 14"><path d="M2 2l10 10M12 2L2 12" stroke="#fff" stroke-width="2.600"/></svg></span>
      </div>

      <div class="flex-1 bg-[#ece9d8] flex flex-col">
        <!-- 布置条件 -->
        <div class="mt-[9px] mx-px h-[297px] border border-[#d3d1bd] rounded-[4px] px-[21px] shrink-0">
          <div class="-mt-[8px] -ml-[15px] w-fit h-4 bg-[#ece9d8] text-[#0046d5] leading-4 px-px">布置条件</div>

          <div class="mt-[7px] h-[161px] border border-[#d3d1bd] rounded-[4px]">
            <div class="-mt-[8px] ml-[7px] w-fit h-4 bg-[#ece9d8] text-[#0046d5] leading-4">墙中圈梁</div>
            <div class="mt-[3px] ml-[9px] h-[21px] flex items-center">
              <span class="w-[13px] h-[13px] border border-[#1c5180] bg-[linear-gradient(135deg,#dcdcd7,#fff)] flex items-center justify-center"><svg class="w-[9px] h-[9px]" viewBox="0 0 9 9"><path d="M1 4l3 3 4-6" fill="none" stroke="#21a121" stroke-width="2"/></svg></span>
              <span class="ml-[3px]">墙高大于</span>
              <span class="ml-[5px] w-[41px] h-[21px] bg-white border border-[#7f9db9] flex items-center pl-[2px] text-[11px]"><span class="bg-[#316ac5] text-white px-px">4</span></span>
              <span class="ml-[5px]"><span class="text-[10px]">m</span>时，在墙半高处或洞口顶设置圈梁</span>
            </div>
            <div class="mt-[6px] ml-[9px] h-[21px] flex items-center">
              <span class="w-[13px] h-[13px] border border-[#1c5180] bg-[linear-gradient(135deg,#dcdcd7,#fff)]"></span>
              <span class="ml-[3px]">墙高大于</span>
              <span class="ml-[5px] w-[41px] h-[21px] bg-white border border-[#7f9db9] flex items-center pl-[3px] text-[11px]">4</span>
              <span class="ml-[5px] w-[99px]"><span class="text-[10px]">m</span>时，沿墙高度每</span>
              <span class="w-[48px] h-[21px] mb-[4px] bg-white border border-[#7f9db9] flex items-center pl-[2px] text-[11px]">2000</span>
              <span class="ml-[5px]"><span class="text-[10px]">mm</span>布置一道圈梁</span>
            </div>
            <div class="mt-[16px] ml-[9px] h-4 flex items-center">
              <span class="w-[13px] h-[13px] border border-[#1c5180] bg-[linear-gradient(135deg,#dcdcd7,#fff)]"></span>
              <span class="ml-[3px]">墙高大于<span class="text-[10px]">2</span>倍墙体长度在墙中设置一道圈梁</span>
            </div>
            <div class="mt-[8px] ml-[9px] h-[21px] flex items-center">
              <span class="w-[13px] h-[13px] border border-[#1c5180] bg-[linear-gradient(135deg,#dcdcd7,#fff)]"></span>
              <span class="ml-[3px]">外墙在离层底标高</span>
              <span class="ml-[11px] w-[40px] h-[21px] bg-white border border-[#7f9db9] flex items-center pl-[2px] text-[11px]">900</span>
              <span class="ml-[6px]"><span class="text-[10px]">mm</span>处设置一道圈梁</span>
            </div>
            <div class="mt-[6px] ml-[25px] leading-[13px]">
              <div>（选择此项，外墙墙中圈梁只按此项条件布置圈梁，不受其他</div>
              <div>条件影响。）</div>
            </div>
          </div>

          <div class="mt-[19px] h-[78px] border border-[#d3d1bd] rounded-[4px]">
            <div class="-mt-[8px] ml-[7px] w-fit h-4 bg-[#ece9d8] text-[#0046d5] leading-4">墙顶圈梁</div>
            <div class="mt-[6px] ml-[9px] h-[21px] flex items-center">
              <span class="w-[13px] h-[13px] border border-[#1c5180] bg-[linear-gradient(135deg,#dcdcd7,#fff)] flex items-center justify-center"><svg class="w-[9px] h-[9px]" viewBox="0 0 9 9"><path d="M1 4l3 3 4-6" fill="none" stroke="#21a121" stroke-width="2"/></svg></span>
              <span class="ml-[3px]">墙高大于</span>
              <span class="ml-[6px] w-[40px] h-[21px] bg-white border border-[#7f9db9] flex items-center pl-[3px] text-[11px]">4</span>
              <span class="ml-[12px]"><span class="text-[10px]">m</span>时，在墙顶处设置圈梁</span>
            </div>
            <div class="mt-[12px] ml-[9px] h-4 flex items-center">
              <span class="w-[13px] h-[13px] border border-[#1c5180] bg-[linear-gradient(135deg,#dcdcd7,#fff)]"></span>
              <span class="ml-[3px]">山墙顶部圈梁随山墙变斜</span>
            </div>
          </div>
        </div>

        <!-- 圈梁属性 -->
        <div class="mt-[8px] mx-px h-[118px] shrink-0 border border-[#d3d1bd] rounded-[4px] px-[6px]">
          <div class="-mt-[8px] ml-[1px] w-fit h-4 bg-[#ece9d8] text-[#0046d5] leading-4 pr-[4px]">圈梁属性（单位：<span class="text-[10px]">mm</span>）</div>
          <div class="mt-[5px] h-[97px] bg-white border border-[#7f9db9]">
            <div class="flex h-[20px] w-[250px] text-center leading-[18px] border-b-2 border-b-[#cbc7b8] bg-[linear-gradient(180deg,#f8f7ee,#ebe9d8)]">
              <span class="w-[30px] border-r border-r-[#c7c5b2]">编号</span>
              <span class="w-[72px] border-r border-r-[#c7c5b2]">墙厚</span>
              <span class="w-[74px] border-r border-r-[#c7c5b2]">圈梁高</span>
              <span class="w-[73px] border-r border-r-[#c7c5b2]">圈梁宽</span>
            </div>
          </div>
        </div>

        <!-- bottom -->
        <div class="flex-1 mt-px border-t border-t-[#aca899] shadow-[inset_0_1px_0_#fff]">
          <div class="mt-[13px] flex items-start">
            <div class="ml-[19px] w-[208px] mt-[7px] flex items-center h-4">
              <span class="w-[13px] h-[13px] border border-[#1c5180] bg-[linear-gradient(135deg,#dcdcd7,#fff)]"></span>
              <span class="ml-[3px]">整楼生成</span>
            </div>
            <span class="w-[73px] h-[23px] border border-[#003c74] rounded-[3px] bg-[linear-gradient(180deg,#fff,#f0f0ea_80%,#dcd8c8)] flex items-center justify-center">新建</span>
            <span class="ml-[23px] w-[73px] h-[23px] border border-[#003c74] rounded-[3px] bg-[linear-gradient(180deg,#fff,#f0f0ea_80%,#dcd8c8)] flex items-center justify-center">删除</span>
          </div>
          <div class="mt-[7px] ml-[19px] flex leading-[13px]">
            <span class="w-[24px]">注：</span>
            <div>
              <div>1.新建时圈梁自动编号，可修改；圈梁宽默认为墙厚，可修改。</div>
              <div>2.墙高指的是墙净高，考虑扣除其上的框架梁及压顶。</div>
              <div>3.洞口顶大于墙半高时，布置在洞口顶。</div>
            </div>
          </div>
          <div class="mt-[7px] flex">
            <span class="ml-[228px] w-[73px] h-[23px] border border-[#003c74] rounded-[3px] bg-[linear-gradient(180deg,#fff,#f0f0ea_80%,#dcd8c8)] flex items-center justify-center">确定</span>
            <span class="ml-[22px] w-[73px] h-[23px] border border-[#003c74] rounded-[3px] bg-[linear-gradient(180deg,#fff,#f0f0ea_80%,#dcd8c8)] flex items-center justify-center">取消</span>
          </div>
        </div>
      </div>
    </div>

    <!-- red annotation arrow drawn over the shot -->
    <svg class="absolute left-[640px] top-[78px] w-[160px] h-[140px]" viewBox="640 78 160 140"><path d="M795 80l2 2L670 199l-6 9-19 4 8-17 9-5z" fill="#f00"/></svg>

    <!-- desktop widget in the corner -->
    <div class="absolute left-[964px] top-[817px] w-[112px] h-[28px] overflow-hidden rounded-tl-[6px] border-l-[3px] border-t-[3px] border-dotted border-[#a9d4bc] bg-[#f3f8e6]">
      <svg class="w-[112px] h-[28px]" viewBox="0 0 112 28"><path d="M5 10h14v10H5zM12 4v24M9 3h6" fill="none" stroke="#b4dcc4" stroke-width="2"/><path d="M32 24c0-6 4-9 9-11 0 7-3 12-9 11z" fill="#bcdcb8"/><circle cx="60" cy="11" r="5" fill="none" stroke="#bcdcc4" stroke-width="2"/><path d="M68 15c2-2 4 0 2 2l-2 2-2-2c-1-2 1-3 2-2z" fill="#bcdcc4"/><circle cx="106" cy="26" r="20" fill="#f5b81e"/><circle cx="109" cy="30" r="16" fill="#fad74e"/></svg>
    </div>
  </body>
</html>
